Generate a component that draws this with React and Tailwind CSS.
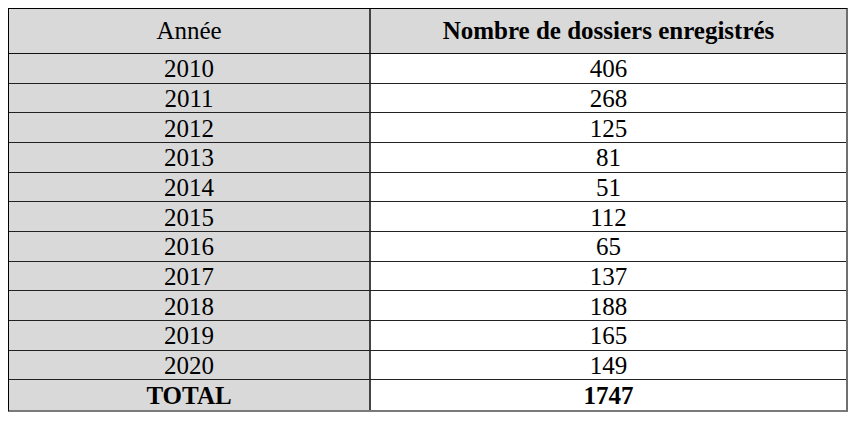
import React from "react";

const rows = [
  ["2010", "406"],
  ["2011", "268"],
  ["2012", "125"],
  ["2013", "81"],
  ["2014", "51"],
  ["2015", "112"],
  ["2016", "65"],
  ["2017", "137"],
  ["2018", "188"],
  ["2019", "165"],
  ["2020", "149"],
];

const App = () => {
  return (
    <div className="w-[860px] h-[427px] bg-white pt-[8px] pl-[8px] font-[family-name:'Liberation_Serif','Times_New_Roman',serif] text-[25px] leading-none text-black">
      <div className="w-[840px] border-t border-l border-black border-r-2 border-b-2 border-r-[#6f6f6f] border-b-[#7a7a7a]">
        <div className="grid grid-cols-[362px_1fr] h-[45px] border-b border-[#111] bg-[#d9d9d9]">
          <div className="flex items-center justify-center border-r-2 border-[#444] pb-[2px]">Année</div>
          <div className="flex items-center justify-center font-bold pb-[2px]">Nombre de dossiers enregistrés</div>
        </div>
        {rows.map(([year, count]) => (
          <div key={year} className="grid grid-cols-[362px_1fr] h-[29.67px] border-b border-[#222]">
            <div className="flex items-center justify-center bg-[#d9d9d9] border-r-2 border-[#444] pt-[1px]">{year}</div>
            <div className="flex items-center justify-center bg-white pt-[1px]">{count}</div>
          </div>
        ))}
        <div className="grid grid-cols-[362px_1fr] h-[29.67px] font-bold">
          <div className="flex items-center justify-center bg-[#d9d9d9] border-r-2 border-[#444] pt-[1px]">TOTAL</div>
          <div className="flex items-center justify-center bg-white pt-[1px]">1747</div>
        </div>
      </div>
    </div>
  );
};

export default App;
